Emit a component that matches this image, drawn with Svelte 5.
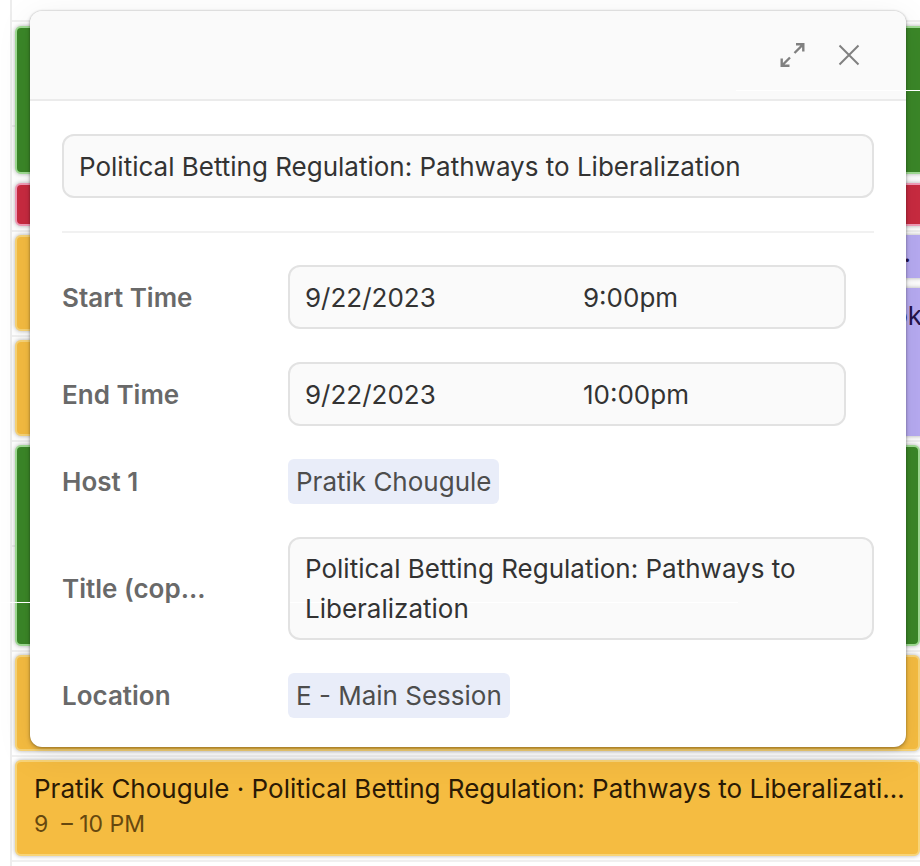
<script>
  const repeated = 'Political Betting Regulation: Pathways to Liberalization';
  let title = $state(repeated);
  let copy = $state(repeated);
  const times = $state([
    { id: 'start', label: 'Start Time', date: '9/22/2023', time: '9:00pm' },
    { id: 'end', label: 'End Time', date: '9/22/2023', time: '10:00pm' }
  ]);
</script>

<div class="page">
  <main class="calendar">
    <div class="event green tall overflow"></div>
    <div class="event red short overflow"></div>
    <div class="split">
      <div class="column">
        <div class="event yellow"></div>
        <div class="event yellow"></div>
      </div>
      <div class="column">
        <div class="event purple short"><span>.</span></div>
        <div class="event purple tall"><span>ok</span></div>
      </div>
    </div>
    <div class="event green double"></div>
    <div class="event yellow"></div>
    <div class="event yellow">
      <p class="name">Pratik Chougule · {repeated}</p>
      <p class="when">9 &nbsp;– 10 PM</p>
    </div>
  </main>

  <div class="popover" role="dialog" aria-label="Event details">
    <header>
      <button type="button" aria-label="Expand">
        <svg class="expand" width="28" height="28" viewBox="0 0 28 28">
          <path d="M15.500 12 24 3.500M17 3.200H24.300V10.500M11 16.500 3 24.500M2.700 17.500V24.800H10.500" />
        </svg>
      </button>
      <button type="button" aria-label="Close">
        <svg width="28" height="28" viewBox="0 0 28 28">
          <path d="M4.500 4.500 23.500 23.500M23.500 4.500 4.500 23.500" />
        </svg>
      </button>
    </header>
    <form>
      <input class="box title" aria-label="Title" bind:value={title} />
      <hr />
      {#each times as t}
        <div class="row">
          <label for={t.id}>{t.label}</label>
          <div class="box pair">
            <input id={t.id} bind:value={t.date} />
            <input aria-label="{t.label} hour" bind:value={t.time} />
          </div>
        </div>
      {/each}
      <div class="row">
        <span class="label">Host 1</span>
        <span class="chip">Pratik Chougule</span>
      </div>
      <div class="row">
        <label for="copy">Title (cop...</label>
        <textarea class="box" id="copy" rows="2" bind:value={copy}></textarea>
      </div>
      <div class="row">
        <span class="label">Location</span>
        <span class="chip">E - Main Session</span>
      </div>
    </form>
  </div>
  <i class="seam top"></i>
  <i class="seam left"></i>
</div>

<style>
  .page {
    position: relative;
    overflow: hidden;
    min-height: 100vh;
    padding-left: 10px;
    box-sizing: border-box;
    background: #fff;
    font-family: Inter, "Liberation Sans", sans-serif;
    font-size: 26px;
    color: #333;
  }
  .calendar {
    display: flex;
    flex-direction: column;
    gap: 9px;
    min-height: 100vh;
    box-sizing: border-box;
    padding: 26px 0 9px 3px;
    border-left: 2px solid #ededed;
    background: repeating-linear-gradient(#fff 0, #fff 103px, #f0f0f0 103px, #f0f0f0 105px);
    background-position: 0 -83px;
    background-size: 100% 1050px;
  }
  .event {
    box-sizing: border-box;
    height: 96px;
    padding: 9px 13px 9px 17px;
    border: 2px solid;
    border-radius: 6px;
    box-shadow: 0 0 4px rgba(0, 0, 0, 0.3);
  }
  .tall { height: 148px; }
  .short { height: 43px; }
  .double { height: 201px; }
  .overflow { margin-right: -10px; }
  .green { background: #3b8728; border-color: #a0dc94; }
  .red { background: #c92b40; border-color: #f29bb7; }
  .yellow { background: #f5bc41; border-color: #f8d477; color: #2b1a05; }
  .purple { background: #b7abf2; border-color: #b7abf2; color: #25124a; }
  .split {
    display: grid;
    grid-template-columns: 1fr 1fr;
    gap: 9px;
    margin-right: -10px;
  }
  .column {
    display: flex;
    flex-direction: column;
    justify-content: space-between;
    gap: 9px;
  }
  .purple {
    padding: 10px 6px;
    text-align: right;
    line-height: 32px;
  }
  .purple.short { padding: 0 17px; }
  p {
    margin: 0;
    overflow: hidden;
    white-space: nowrap;
    text-overflow: ellipsis;
  }
  .name { line-height: 36px; }
  .when {
    font-size: 23px;
    line-height: 34px;
    color: #66480f;
  }
  .popover {
    position: absolute;
    top: 11px;
    left: 30px;
    right: 14px;
    border-radius: 12px;
    background: #fff;
    box-shadow: 0 0 2px rgba(0, 0, 0, 0.3), 0 2px 4px rgba(0, 0, 0, 0.25), 0 8px 36px rgba(0, 0, 0, 0.08);
  }
  header {
    display: flex;
    justify-content: flex-end;
    align-items: center;
    gap: 28px;
    height: 88px;
    padding-right: 43px;
    border-bottom: 2px solid #ebebeb;
    border-radius: 12px 12px 0 0;
    background: #fafafa;
  }
  button {
    display: flex;
    padding: 0;
    border: 0;
    background: none;
  }
  svg {
    fill: none;
    stroke: #808080;
    stroke-width: 2;
  }
  .expand { stroke-width: 2.4; }
  form {
    display: flex;
    flex-direction: column;
    gap: 33px;
    padding: 33px 32px 29px;
  }
  input,
  textarea {
    min-width: 0;
    margin: 0;
    padding: 0;
    border: 0;
    outline: 0;
    background: none;
    font: inherit;
    color: inherit;
  }
  .box {
    box-sizing: border-box;
    height: 64px;
    padding: 0 15px;
    border: 2px solid #e2e2e2;
    border-radius: 12px;
    background: #fafafa;
  }
  hr {
    width: 100%;
    height: 2px;
    margin: 0 0 -1px;
    border: 0;
    background: #f1f1f1;
  }
  .row {
    display: grid;
    grid-template-columns: 226px 1fr;
    align-items: center;
  }
  label,
  .label {
    font-weight: 600;
    color: #696969;
  }
  .pair {
    display: grid;
    grid-template-columns: 1fr 1fr;
    gap: 32px;
    margin-right: 28px;
  }
  .chip {
    justify-self: start;
    padding: 0 8px;
    border-radius: 6px;
    background: #e9edf9;
    line-height: 45px;
    color: #4d4d4d;
  }
  textarea.box {
    height: 103px;
    padding: 10px 15px 9px;
    line-height: 40px;
    overflow: hidden;
    resize: none;
    background: linear-gradient(#fff, #fff) 0 63px / 77% 1px no-repeat #fafafa;
  }
  .seam {
    position: absolute;
    height: 1px;
    background: #fff;
  }
  .seam.top { top: 90px; right: 0; width: 20%; }
  .seam.left { top: 602px; left: 0; width: 30px; }
</style>
